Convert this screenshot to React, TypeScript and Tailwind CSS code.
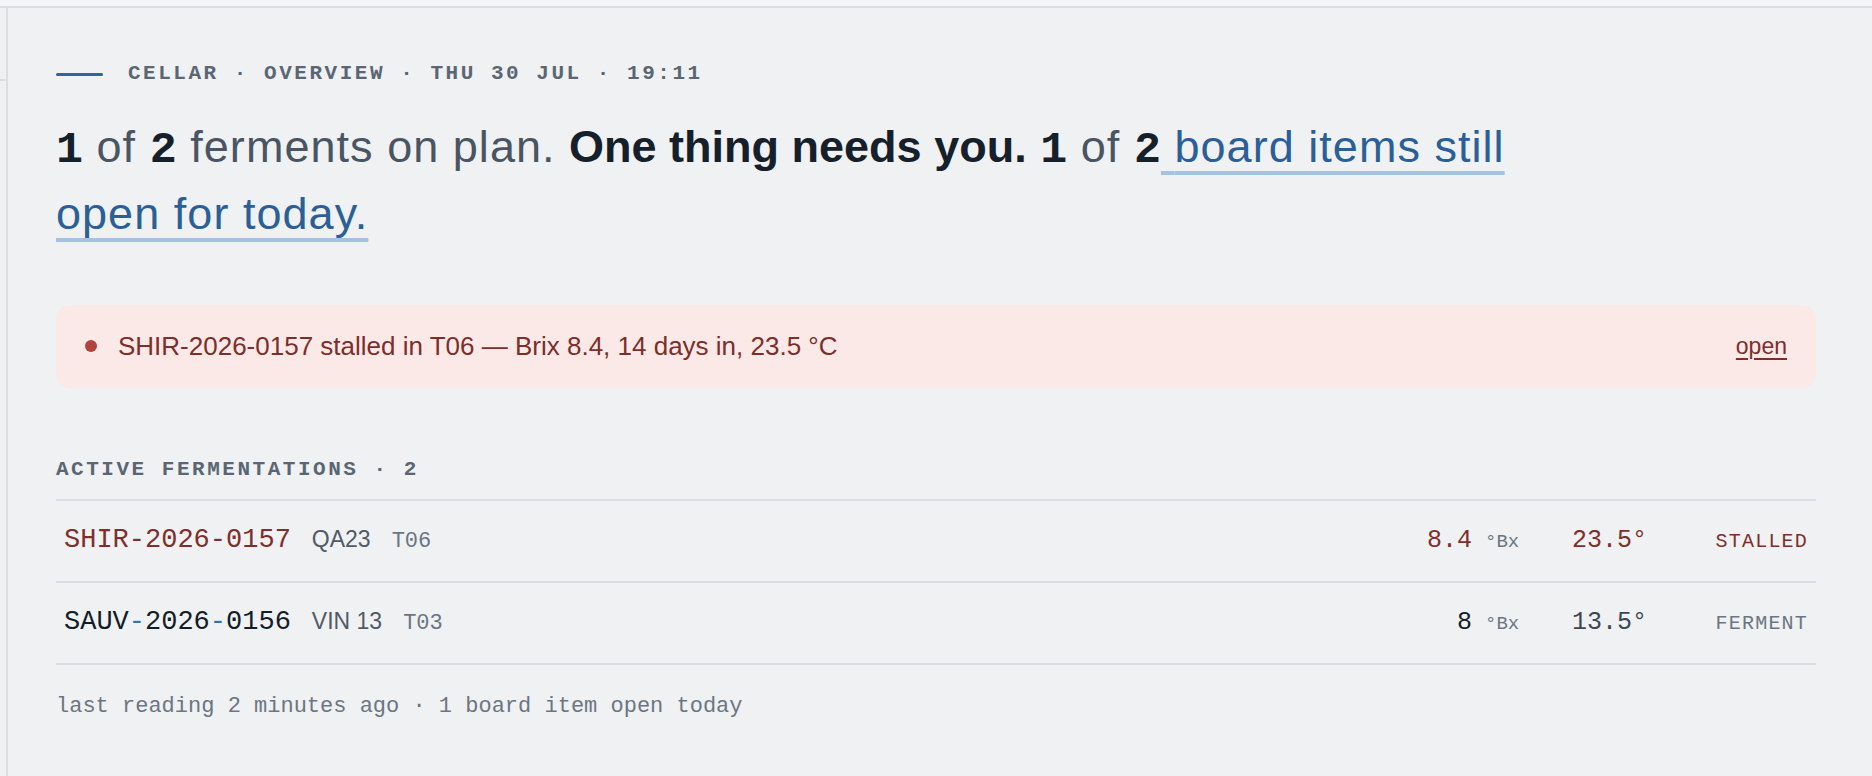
const mono = "font-['Liberation_Mono',monospace]"

type Ferment = {
  id: string[]
  stalled: boolean
  block: string
  tank: string
  brix: string
  temp: string
  status: string
}

const ferments: Ferment[] = [
  { id: ['SHIR', '2026', '0157'], stalled: true, block: 'QA23', tank: 'T06', brix: '8.4', temp: '23.5°', status: 'STALLED' },
  { id: ['SAUV', '2026', '0156'], stalled: false, block: 'VIN 13', tank: 'T03', brix: '8', temp: '13.5°', status: 'FERMENT' },
]

const FermentRow = ({ f }: { f: Ferment }) => {
  const idColor = f.stalled ? 'text-[#7e2f2b]' : 'text-[#131d28]'
  const dash = f.stalled ? 'text-[#7e2f2b]' : 'text-[#3a6ea8]'
  return (
    <div className="flex h-[82px] items-center border-b-2 border-[#dadde1] pl-2 pr-2">
      <div className="flex flex-1 items-baseline gap-[21px]">
        <span className={`${mono} text-[27px] ${idColor}`}>
          {f.id[0]}
          <span className={dash}>-</span>
          {f.id[1]}
          <span className={dash}>-</span>
          {f.id[2]}
        </span>
        <span className="text-[23px] text-[#4f5a66]">{f.block}</span>
        <span className={`${mono} text-[22px] text-[#6b7682]`}>{f.tank}</span>
      </div>
      <div className={`flex items-baseline ${mono}`}>
        <span className={`w-[90px] text-right text-[25px] ${f.stalled ? 'text-[#7e2f2b]' : 'text-[#131d28]'}`}>
          {f.brix}
        </span>
        <span className="ml-[13px] w-[87px] text-[19px] text-[#6b7682]">°Bx</span>
        <span className={`w-[136px] text-[25px] ${f.stalled ? 'text-[#7e2f2b]' : 'text-[#3c4753]'}`}>{f.temp}</span>
        <span
          className={`w-[100px] text-right text-[20px] tracking-[0.06em] ${f.stalled ? 'text-[#7e2f2b]' : 'text-[#6b7682]'}`}
        >
          {f.status}
        </span>
      </div>
    </div>
  )
}

export default function App() {
  return (
    <div className="flex min-h-screen flex-col bg-[#eff1f3] font-['Liberation_Sans',sans-serif]">
      <div className="h-[8px] border-b-2 border-[#dcdfe2] bg-[#f3f5f6]" />
      <div className="flex flex-1">
        <aside className="w-[8px] shrink-0 border-r-2 border-[#dcdfe2] bg-[#eef0f2]">
          <div className="h-[73px] border-b-2 border-[#dcdfe2]" />
        </aside>

        <main className="flex-1 pb-10 pl-12 pr-14 pt-[52px]">
          <div className="flex h-[28px] items-center gap-[25px]">
            <span className="h-[3px] w-[47px] rounded-full bg-[#2f64a1]" />
            <span className={`${mono} text-[21px] font-bold tracking-[0.12em] text-[#5a6674]`}>
              CELLAR · OVERVIEW · THU 30 JUL · 19:11
            </span>
          </div>

          <h1 className="mt-[25px] max-w-[1500px] text-[45px] leading-[67px] tracking-[0.023em] text-[#4a5563]">
            <span className={`${mono} font-bold leading-none tracking-normal text-[#16202b]`}>1</span> of{' '}
            <span className={`${mono} font-bold leading-none tracking-normal text-[#16202b]`}>2</span> ferments on plan.{' '}
            <span className="font-semibold tracking-normal text-[#16202b]">One thing needs you.</span>{' '}
            <span className={`${mono} font-bold leading-none tracking-normal text-[#16202b]`}>1</span> of{' '}
            <span className={`${mono} font-bold leading-none tracking-normal text-[#16202b]`}>2</span>
            <span className="text-[#2b5f97] underline decoration-[#a7c2de] decoration-4 underline-offset-[9px]">
              {' '}board items still open for today.
            </span>
          </h1>

          <div className="mt-[58px] flex items-center justify-between rounded-[14px] bg-[#fbe9e8] px-[29px] py-[24px]">
            <div className="flex items-center gap-[21px]">
              <span className="h-[12px] w-[12px] rounded-full bg-[#b0433b]" />
              <span className="text-[26px] leading-[31px] text-[#7c2e2a]">
                SHIR-2026-0157 stalled in T06 — Brix 8.4, 14 days in, 23.5 °C
              </span>
            </div>
            <a href="#" className="text-[23px] text-[#7c2e2a] underline decoration-2 underline-offset-4">
              open
            </a>
          </div>

          <div className={`mt-[68px] h-[28px] leading-[28px] ${mono} text-[21px] font-bold tracking-[0.12em] text-[#5a6674]`}>
            ACTIVE FERMENTATIONS · 2
          </div>

          <div className="mt-[15px] border-t-2 border-[#dadde1]">
            {ferments.map((f) => (
              <FermentRow key={f.id.join('-')} f={f} />
            ))}
          </div>

          <p className={`mt-[27px] ${mono} text-[22px] leading-[30px] text-[#6b7682]`}>
            last reading 2 minutes ago · 1 board item open today
          </p>
        </main>
      </div>
    </div>
  )
}
